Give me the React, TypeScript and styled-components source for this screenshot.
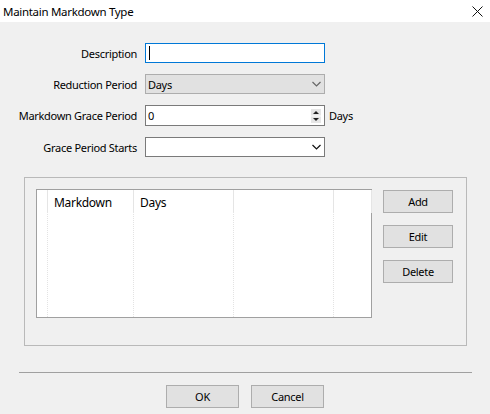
import styled, { createGlobalStyle } from 'styled-components';

const GlobalStyle = createGlobalStyle`
    html, body {
        margin: 0;
        padding: 0;
        background: #f0f0f0;
    }
    body {
        font-family: "Noto Sans", "Liberation Sans", sans-serif;
        font-size: 11px;
        letter-spacing: -0.3px;
        color: #000;
    }
`

const Window = styled.div`
    width: 490px;
    height: 414px;
    background: #f0f0f0;
    display: flex;
    flex-direction: column;
    overflow: hidden;
`

const TitleBar = styled.div`
    height: 22px;
    background: #fff;
    display: flex;
    align-items: center;
    justify-content: space-between;
    padding: 0 7px 0 3px;
    font-size: 11.5px;
`

const CloseIcon = () => (
    <svg width="11" height="11" viewBox="0 0 11 11">
        <path d="M0.5 0.5 L10.5 10.5 M10.5 0.5 L0.5 10.5" stroke="#111" strokeWidth="1" />
    </svg>
)

const Form = styled.div`
    display: grid;
    grid-template-columns: 137px 180px auto;
    grid-template-rows: 20px 20px 21px 20px;
    column-gap: 8px;
    row-gap: 11px;
    padding-top: 21px;
    align-items: center;
`

const Label = styled.div`
    text-align: right;
    white-space: nowrap;
`

const Field = styled.div<{ $focused?: boolean, $disabled?: boolean }>`
    height: 100%;
    box-sizing: border-box;
    border: 1px solid ${({ $focused, $disabled }) => $focused ? '#0078d7' : $disabled ? '#adadad' : '#7a7a7a'};
    background: ${({ $disabled }) => $disabled ? '#e1e1e1' : '#fff'};
    display: flex;
    align-items: center;
    padding: 0 3px 0 2px;
    gap: 2px;
`

const FieldText = styled.span`
    flex: 1;
`

const Caret = styled.span`
    width: 1px;
    height: 14px;
    background: #000;
    margin-left: 1px;
`

const Unit = styled.div`
    margin-left: -4px;
`

const Chevron = ({ color }: { color: string }) => (
    <svg width="9" height="6" viewBox="0 0 9 6">
        <path d="M0.5 1 L4.5 5 L8.5 1" stroke={color} strokeWidth="1.2" fill="none" />
    </svg>
)

const Spinner = () => (
    <svg width="10" height="14" viewBox="0 0 10 14">
        <rect x="0" y="0" width="10" height="6.5" fill="#e6e6e6" />
        <rect x="0" y="7.5" width="10" height="6.5" fill="#e6e6e6" />
        <path d="M2 5 L5 2 L8 5 Z" fill="#222" />
        <path d="M2 9 L5 12 L8 9 Z" fill="#222" />
    </svg>
)

const GroupBox = styled.div`
    margin: 20px 0 0 24px;
    width: 443px;
    height: 169px;
    box-sizing: border-box;
    border: 1px solid #b9b9b9;
    display: flex;
    padding: 11px 0 0 11px;
    gap: 11px;
`

const ListView = styled.div`
    width: 336px;
    height: 129px;
    box-sizing: border-box;
    border: 1px solid #a0a0a0;
    background: #fff;
    display: flex;
`

const Column = styled.div<{ $width: number }>`
    width: ${({ $width }) => $width}px;
    box-sizing: border-box;
    display: flex;
    flex-direction: column;
    border-right: 1px dotted #e3e3e3;
    &:last-child {
        border-right: none;
        flex: 1;
    }
`

const ColumnHeader = styled.div`
    height: 23px;
    padding: 1px 0 0 6px;
    display: flex;
    align-items: center;
    box-sizing: border-box;
    border-right: 1px solid #e5e5e5;
    margin-right: -1px;
    font-size: 12px;
`

const ButtonStack = styled.div`
    display: flex;
    flex-direction: column;
    gap: 12px;
    padding-top: 1px;
`

const Button = styled.button`
    width: 70px;
    height: 23px;
    box-sizing: border-box;
    border: 1px solid #adadad;
    background: #e1e1e1;
    font-family: inherit;
    font-size: 11px;
    letter-spacing: -0.3px;
    color: #000;
    padding: 0;
`

const Separator = styled.div`
    margin: 26px 0 0 19px;
    width: 453px;
    height: 1px;
    background: #a0a0a0;
`

const Footer = styled.div`
    display: flex;
    justify-content: center;
    gap: 12px;
    margin-top: 12px;
`

const DialogButton = styled(Button)`
    width: 73px;
`

const columns = [
    { title: '', width: 11 },
    { title: 'Markdown', width: 86 },
    { title: 'Days', width: 100 },
    { title: '', width: 100 },
    { title: '', width: 37 },
];

export default function App() {
    return (
        <>
            <GlobalStyle />
            <Window>
                <TitleBar>
                    <span>Maintain Markdown Type</span>
                    <CloseIcon />
                </TitleBar>
                <Form>
                    <Label>Description</Label>
                    <Field $focused><Caret /></Field>
                    <div />

                    <Label>Reduction Period</Label>
                    <Field $disabled>
                        <FieldText>Days</FieldText>
                        <Chevron color="#666" />
                    </Field>
                    <div />

                    <Label>Markdown Grace Period</Label>
                    <Field>
                        <FieldText>0</FieldText>
                        <Spinner />
                    </Field>
                    <Unit>Days</Unit>

                    <Label>Grace Period Starts</Label>
                    <Field>
                        <FieldText />
                        <Chevron color="#111" />
                    </Field>
                    <div />
                </Form>
                <GroupBox>
                    <ListView>
                        {columns.map((c, i) => (
                            <Column key={i} $width={c.width}>
                                <ColumnHeader>{c.title}</ColumnHeader>
                            </Column>
                        ))}
                    </ListView>
                    <ButtonStack>
                        <Button>Add</Button>
                        <Button>Edit</Button>
                        <Button>Delete</Button>
                    </ButtonStack>
                </GroupBox>
                <Separator />
                <Footer>
                    <DialogButton>OK</DialogButton>
                    <DialogButton>Cancel</DialogButton>
                </Footer>
            </Window>
        </>
    );
}
